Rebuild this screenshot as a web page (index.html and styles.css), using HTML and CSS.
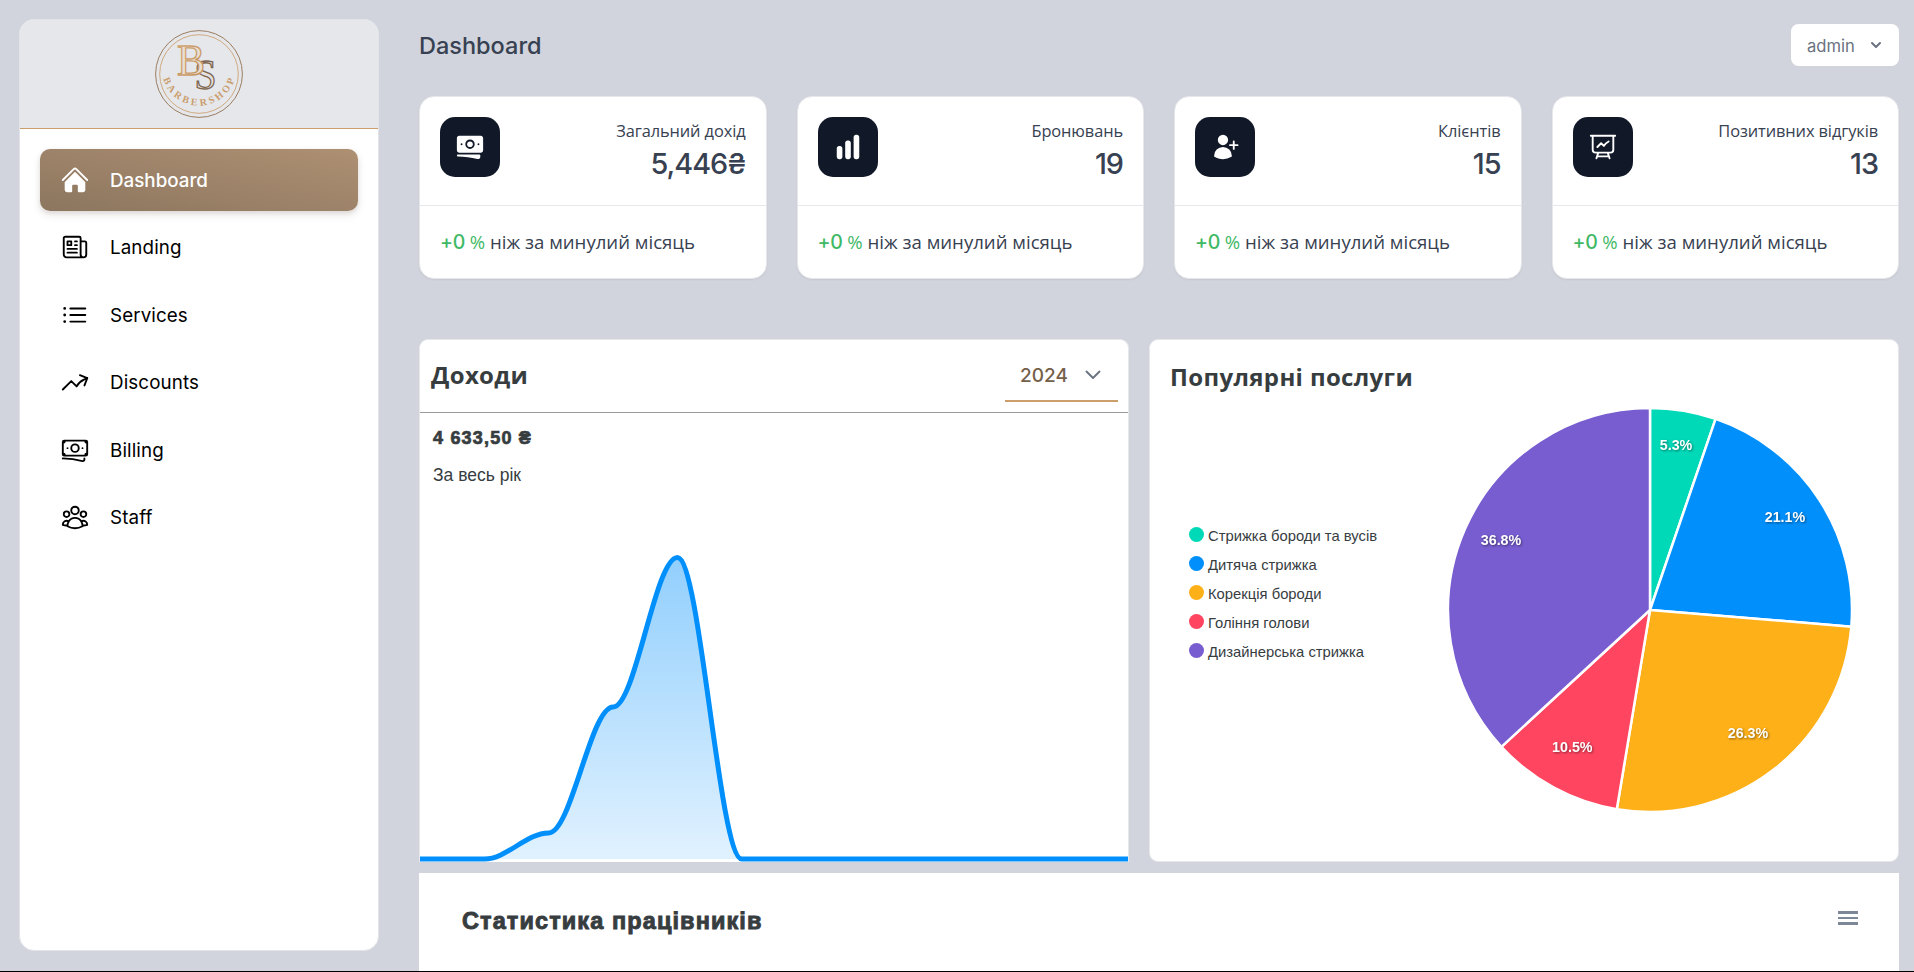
FILE: index.html
```html
<!DOCTYPE html>
<html lang="uk">
<head>
<meta charset="utf-8">
<title>Dashboard</title>
<link rel="stylesheet" href="styles.css">
</head>
<body>
<div class="app">
  <aside class="sidebar">
    <div class="brand">
      <svg class="logo" viewBox="0 0 90 90" width="90" height="90">
        <defs>
          <linearGradient id="gold" x1="0" y1="0" x2="1" y2="1"><stop offset="0" stop-color="#d3a675"/><stop offset="1" stop-color="#c18f58"/></linearGradient>
          <path id="arc" d="M7.8 42 A37.3 37.3 0 0 0 82.2 42"/>
        </defs>
        <circle cx="45" cy="45" r="43.4" fill="none" stroke="#9a7d60" stroke-width="1"/>
        <circle cx="45" cy="45" r="39.3" fill="none" stroke="#d0aa80" stroke-width="1"/>
        <text class="logo-s" x="40.5" y="60" textLength="22" lengthAdjust="spacingAndGlyphs">S</text>
        <text class="logo-b" x="23" y="46" textLength="28" lengthAdjust="spacingAndGlyphs">B</text>
        <text class="logo-name"><textPath href="#arc" startOffset="51%" text-anchor="middle">BARBERSHOP</textPath></text>
      </svg>
    </div>
    <nav class="nav">
      <a class="nav-item active"><svg class="icon solid" viewBox="0 0 24 24"><path d="M11.47 3.84a.75.75 0 011.06 0l8.69 8.69a.75.75 0 101.06-1.06l-8.689-8.69a2.25 2.25 0 00-3.182 0l-8.69 8.69a.75.75 0 001.061 1.06l8.69-8.69z"/><path d="M12 5.432l8.159 8.159c.03.03.06.058.091.086v6.198c0 1.035-.84 1.875-1.875 1.875H15a.75.75 0 01-.75-.75v-4.5a.75.75 0 00-.75-.75h-3a.75.75 0 00-.75.75V21a.75.75 0 01-.75.75H5.625a1.875 1.875 0 01-1.875-1.875v-6.198a2.29 2.29 0 00.091-.086L12 5.43z"/></svg><span>Dashboard</span></a>
      <a class="nav-item"><svg class="icon" viewBox="0 0 24 24"><path d="M12 7.5h1.5m-1.5 3h1.5m-7.5 3h7.5m-7.5 3h7.5m3-9h3.375c.621 0 1.125.504 1.125 1.125V18a2.25 2.25 0 01-2.25 2.25M16.5 7.5V18a2.25 2.25 0 002.25 2.25M16.5 7.5V4.875c0-.621-.504-1.125-1.125-1.125H4.125C3.504 3.75 3 4.254 3 4.875V18a2.25 2.25 0 002.25 2.25h13.5M6 7.5h3v3H6v-3z"/></svg><span>Landing</span></a>
      <a class="nav-item"><svg class="icon" viewBox="0 0 24 24"><path d="M8.25 6.75h12M8.25 12h12m-12 5.25h12M3.75 6.75h.007v.008H3.75V6.75zm.375 0a.375.375 0 11-.75 0 .375.375 0 01.75 0zM3.75 12h.007v.008H3.75V12zm.375 0a.375.375 0 11-.75 0 .375.375 0 01.75 0zm-.375 5.25h.007v.008H3.75v-.008zm.375 0a.375.375 0 11-.75 0 .375.375 0 01.75 0z"/></svg><span>Services</span></a>
      <a class="nav-item"><svg class="icon" viewBox="0 0 24 24"><path d="M2.25 18L9 11.25l4.306 4.307a11.95 11.95 0 015.814-5.519l2.74-1.22m0 0l-5.94-2.28m5.94 2.28l-2.28 5.941"/></svg><span>Discounts</span></a>
      <a class="nav-item"><svg class="icon" viewBox="0 0 24 24"><path d="M2.25 18.75a60.07 60.07 0 0115.797 2.101c.727.198 1.453-.342 1.453-1.096V18.75M3.75 4.5v.75A.75.75 0 013 6h-.75m0 0v-.375c0-.621.504-1.125 1.125-1.125H20.25M2.25 6v9m18-10.5v.75c0 .414.336.75.75.75h.75m-1.5-1.5h.375c.621 0 1.125.504 1.125 1.125v9.75c0 .621-.504 1.125-1.125 1.125h-.375m1.5-1.5H21a.75.75 0 00-.75.75v.75m0 0H3.75m0 0h-.375a1.125 1.125 0 01-1.125-1.125V15m1.5 1.5v-.75A.75.75 0 003 15h-.75M15 10.5a3 3 0 11-6 0 3 3 0 016 0zm3 0h.008v.008H18V10.5zm-12 0h.008v.008H6V10.5z"/></svg><span>Billing</span></a>
      <a class="nav-item"><svg class="icon" viewBox="0 0 24 24"><path d="M18 18.72a9.094 9.094 0 003.741-.479 3 3 0 00-4.682-2.72m.94 3.198l.001.031c0 .225-.012.447-.037.666A11.944 11.944 0 0112 21c-2.17 0-4.207-.576-5.963-1.584A6.062 6.062 0 016 18.719m12 0a5.971 5.971 0 00-.941-3.197m0 0A5.995 5.995 0 0012 12.75a5.995 5.995 0 00-5.058 2.772m0 0a3 3 0 00-4.681 2.72 8.986 8.986 0 003.74.477m.94-3.197a5.971 5.971 0 00-.94 3.197M15 6.75a3 3 0 11-6 0 3 3 0 016 0zm6 3a2.25 2.25 0 11-4.5 0 2.25 2.25 0 014.5 0zm-13.5 0a2.25 2.25 0 11-4.5 0 2.25 2.25 0 014.5 0z"/></svg><span>Staff</span></a>
    </nav>
  </aside>

  <main class="main">
    <header class="topbar">
      <h1 class="page-title">Dashboard</h1>
      <button class="user-btn"><span>admin</span><svg viewBox="0 0 20 20" width="20" height="20"><path fill="currentColor" d="M5.293 7.293a1 1 0 011.414 0L10 10.586l3.293-3.293a1 1 0 111.414 1.414l-4 4a1 1 0 01-1.414 0l-4-4a1 1 0 010-1.414z"/></svg></button>
    </header>

    <section class="stats">
      <article class="stat">
        <div class="stat-top">
          <div class="tile"><svg class="icon solid" viewBox="0 0 24 24"><path d="M12 7.5a2.25 2.25 0 100 4.5 2.25 2.25 0 000-4.5z"/><path fill-rule="evenodd" d="M1.5 4.875C1.5 3.839 2.34 3 3.375 3h17.25c1.035 0 1.875.84 1.875 1.875v9.75c0 1.036-.84 1.875-1.875 1.875H3.375A1.875 1.875 0 011.5 14.625v-9.75zM8.25 9.75a3.75 3.75 0 117.5 0 3.75 3.75 0 01-7.5 0zM18.75 9a.75.75 0 00-.75.75v.008c0 .414.336.75.75.75h.008a.75.75 0 00.75-.75V9.75a.75.75 0 00-.75-.75h-.008zM4.5 9.75A.75.75 0 015.25 9h.008a.75.75 0 01.75.75v.008a.75.75 0 01-.75.75H5.25a.75.75 0 01-.75-.75V9.75z"/><path d="M2.25 18a.75.75 0 000 1.5c5.4 0 10.63.722 15.6 2.075 1.19.324 2.4-.558 2.4-1.82V18.75a.75.75 0 00-.75-.75H2.25z"/></svg></div>
          <div class="stat-info"><p class="stat-label">Загальний дохід</p><p class="stat-value">5,446₴</p></div>
        </div>
        <p class="stat-foot"><b class="pct"><span class="num">+0</span> %</b> ніж за минулий місяць</p>
      </article>
      <article class="stat">
        <div class="stat-top">
          <div class="tile"><svg class="icon solid" viewBox="0 0 24 24"><path d="M18.375 2.25c-1.035 0-1.875.84-1.875 1.875v15.75c0 1.035.84 1.875 1.875 1.875h.75c1.035 0 1.875-.84 1.875-1.875V4.125c0-1.036-.84-1.875-1.875-1.875h-.75zM9.75 8.625c0-1.036.84-1.875 1.875-1.875h.75c1.036 0 1.875.84 1.875 1.875v11.25c0 1.035-.84 1.875-1.875 1.875h-.75a1.875 1.875 0 01-1.875-1.875V8.625zM3 13.125c0-1.036.84-1.875 1.875-1.875h.75c1.036 0 1.875.84 1.875 1.875v6.75c0 1.035-.84 1.875-1.875 1.875h-.75A1.875 1.875 0 013 19.875v-6.75z"/></svg></div>
          <div class="stat-info"><p class="stat-label">Бронювань</p><p class="stat-value">19</p></div>
        </div>
        <p class="stat-foot"><b class="pct"><span class="num">+0</span> %</b> ніж за минулий місяць</p>
      </article>
      <article class="stat">
        <div class="stat-top">
          <div class="tile"><svg class="icon solid" viewBox="0 0 24 24"><path d="M6.25 6.375a4.125 4.125 0 118.25 0 4.125 4.125 0 01-8.25 0zM3.25 19.125a7.125 7.125 0 0114.25 0v.003l-.001.119a.75.75 0 01-.363.63 13.067 13.067 0 01-6.761 1.873c-2.472 0-4.786-.684-6.76-1.873a.75.75 0 01-.364-.63l-.001-.122zM19.75 7.5a.75.75 0 00-1.5 0v2.25H16a.75.75 0 000 1.5h2.25v2.25a.75.75 0 001.5 0v-2.25H22a.75.75 0 000-1.5h-2.25V7.5z"/></svg></div>
          <div class="stat-info"><p class="stat-label">Клієнтів</p><p class="stat-value">15</p></div>
        </div>
        <p class="stat-foot"><b class="pct"><span class="num">+0</span> %</b> ніж за минулий місяць</p>
      </article>
      <article class="stat">
        <div class="stat-top">
          <div class="tile"><svg class="icon" viewBox="0 0 24 24"><path d="M3.75 3v11.25A2.25 2.25 0 006 16.5h2.25M3.75 3h-1.5m1.5 0h16.5m0 0h1.5m-1.5 0v11.25A2.25 2.25 0 0118 16.5h-2.25m-7.5 0h7.5m-7.5 0l-1 3m8.5-3l1 3m0 0l.5 1.5m-.5-1.5h-9.5m0 0l-.5 1.5m.75-9l3-3 2.148 2.148A12.061 12.061 0 0116.5 7.605"/></svg></div>
          <div class="stat-info"><p class="stat-label">Позитивних відгуків</p><p class="stat-value">13</p></div>
        </div>
        <p class="stat-foot"><b class="pct"><span class="num">+0</span> %</b> ніж за минулий місяць</p>
      </article>
    </section>

    <section class="charts">
      <article class="panel income">
        <div class="income-head">
          <h2 class="panel-title">Доходи</h2>
          <div class="year"><span>2024</span><svg viewBox="0 0 16 10" width="16" height="10"><path d="M1.5 1.5 8 8l6.5-6.5" fill="none" stroke="#6b7280" stroke-width="1.9" stroke-linecap="round" stroke-linejoin="round"/></svg></div>
        </div>
        <p class="income-sum">4 633,50 ₴</p>
        <p class="income-note">За весь рік</p>
        <svg class="area" viewBox="0 0 708 314" width="708" height="314">
          <defs><linearGradient id="fill" x1="0" y1="0" x2="0" y2="1"><stop offset="0" stop-color="#008ffb" stop-opacity=".43"/><stop offset="1" stop-color="#008ffb" stop-opacity=".12"/></linearGradient></defs>
          <path fill="url(#fill)" d="M0 311H64.4C86.9 311 106.2 285 128.7 285C151.3 285 170.6 159 193.1 159C215.6 159 235 9.5 257.5 9.5C280 9.5 299.3 311 321.8 311Z"/>
          <path fill="none" stroke="#008ffb" stroke-width="5" d="M0 311H64.4C86.9 311 106.2 285 128.7 285C151.3 285 170.6 159 193.1 159C215.6 159 235 9.5 257.5 9.5C280 9.5 299.3 311 321.8 311H708"/>
        </svg>
      </article>
      <article class="panel services">
        <h2 class="panel-title">Популярні послуги</h2>
        <div class="pie-row">
          <ul class="legend">
            <li><i class="dot teal"></i>Стрижка бороди та вусів</li>
            <li><i class="dot blue"></i>Дитяча стрижка</li>
            <li><i class="dot amber"></i>Корекція бороди</li>
            <li><i class="dot red"></i>Гоління голови</li>
            <li><i class="dot violet"></i>Дизайнерська стрижка</li>
          </ul>
          <svg class="pie" viewBox="-205 -205 410 410" width="410" height="410">
            <g stroke="#fff" stroke-width="2.5" stroke-linejoin="round">
              <path fill="#00d9b8" d="M0 0V-202A202 202 0 0 1 65.6 -191.1Z"/>
              <path fill="#008ffb" d="M0 0L65.6 -191.1A202 202 0 0 1 201.3 16.7Z"/>
              <path fill="#feb019" d="M0 0L201.3 16.7A202 202 0 0 1 -33.2 199.2Z"/>
              <path fill="#ff4560" d="M0 0L-33.2 199.2A202 202 0 0 1 -148.6 136.8Z"/>
              <path fill="#775dd0" d="M0 0L-148.6 136.8A202 202 0 0 1 0 -202Z"/>
            </g>
            <g class="pie-labels">
              <text x="26" y="-159.7">5.3%</text>
              <text x="135" y="-87.7">21.1%</text>
              <text x="98" y="128.3">26.3%</text>
              <text x="-77.7" y="142">10.5%</text>
              <text x="-149" y="-64.7">36.8%</text>
            </g>
          </svg>
        </div>
      </article>
    </section>

    <section class="staff">
      <h2 class="staff-title">Статистика працівників</h2>
      <div class="menu"><i></i><i></i><i></i></div>
    </section>
  </main>
</div>
</body>
</html>
```
FILE: styles.css
```css
* { box-sizing: border-box; margin: 0; padding: 0; }
body {
  height: 972px;
  overflow: hidden;
  background: #d1d4dc;
  border-bottom: 1px solid #000;
  font-family: Inter, "Open Sans", sans-serif;
  color: #374151;
}
.app { display: flex; height: 971px; overflow: hidden; padding: 19px 15px 0 19px; }

.sidebar {
  width: 360px;
  height: 932px;
  flex: none;
  background: #fff;
  border: 1px solid #e2e4e9;
  border-radius: 15px;
  overflow: hidden;
}
.brand {
  height: 109px;
  display: flex;
  justify-content: center;
  padding-top: 9px;
  background: #e5e7eb;
  border-bottom: 1px solid #cc9e6c;
}
.logo-b, .logo-s { font-family: "Liberation Serif", serif; font-size: 44px; }
.logo-b { fill: #eadfd4; stroke: url(#gold); stroke-width: 1.3; }
.logo-s { font-size: 42px; fill: #e5e2df; stroke: #7d654f; stroke-width: 1.3; }
.logo-name { font-family: "Liberation Serif", serif; font-size: 10px; font-weight: 700; fill: #cb9e6e; letter-spacing: 2.9px; }

.nav { display: flex; flex-direction: column; gap: 6px; padding: 20px; }
.nav-item {
  height: 61.5px;
  display: flex;
  align-items: center;
  gap: 20px;
  padding: 0 20px;
  border-radius: 10px;
  color: #000;
  font-size: 18.8px;
}
.nav-item span { padding-top: 1px; letter-spacing: .1px; }
.nav-item.active span { font-weight: 450; letter-spacing: 0; }
.nav-item.active {
  color: #fff;
  background: linear-gradient(to top right, #8c765f, #ae9073);
  box-shadow: 0 4px 8px rgba(60, 40, 20, .1), 0 2px 4px rgba(60, 40, 20, .1);
}
.icon { width: 30px; height: 30px; flex: none; fill: none; stroke: currentColor; stroke-width: 1.5; stroke-linecap: round; stroke-linejoin: round; }
.icon.solid { fill: currentColor; stroke: none; }

.main { flex: 1; margin-left: 40px; display: flex; flex-direction: column; }
.topbar { display: flex; justify-content: space-between; align-items: center; height: 42px; margin-top: 5px; }
.page-title { font-size: 23.5px; font-weight: 500; line-height: 42px; padding-top: 2px; }
.user-btn {
  width: 108px;
  height: 42px;
  display: flex;
  align-items: center;
  justify-content: space-between;
  padding: 0 13px 0 16px;
  background: #fff;
  border: 0;
  border-radius: 7.5px;
  color: #6b7280;
  font: 400 16.6px Inter, sans-serif;
}
.user-btn span { padding-top: 2px; }

.stats { display: grid; grid-template-columns: repeat(4, 1fr); gap: 30px; margin-top: 30px; }
.stat {
  height: 183px;
  background: #fff;
  border: 1px solid #e5e7eb;
  border-radius: 15px;
  box-shadow: 0 1px 2px rgba(0, 0, 0, .06);
}
.stat-top { height: 109px; display: flex; justify-content: space-between; padding: 20px; border-bottom: 1px solid #e5e7eb; }
.tile { width: 60px; height: 60px; display: flex; align-items: center; justify-content: center; background: #111827; border-radius: 15px; color: #fff; }
.stat-info { text-align: right; padding-top: 1px; }
.stat-label { font-family: "Open Sans", sans-serif; font-size: 16.4px; line-height: 26px; font-weight: 400; letter-spacing: -.1px; white-space: nowrap; }
.stat-value { font-size: 28.8px; line-height: 40px; font-weight: 550; letter-spacing: -1px; }
.stat-foot { padding: 20.5px 20px 0; font-family: "Open Sans", sans-serif; font-size: 18.6px; line-height: 30px; white-space: nowrap; }
.pct { font-weight: 500; color: #3fb965; }
.num { font-family: Inter, sans-serif; font-weight: 550; font-size: 19.5px; letter-spacing: -.3px; }

.charts { display: grid; grid-template-columns: 710px 1fr; gap: 20px; margin-top: 60px; }
.panel { height: 523px; background: #fff; border: 1px solid #e5e7eb; border-radius: 9px; overflow: hidden; }
.panel-title { font-family: "Open Sans", sans-serif; font-size: 24px; line-height: 34px; font-weight: 700; color: #373d3f; letter-spacing: .35px; white-space: nowrap; }
.income { display: flex; flex-direction: column; border-bottom: 0; border-radius: 9px 9px 0 0; }
.income-head { height: 73px; display: flex; justify-content: space-between; padding: 18px 10px 0 11px; border-bottom: 1px solid #9a9a9a; }
.year {
  width: 113px;
  height: 44px;
  display: flex;
  align-items: center;
  justify-content: space-between;
  padding: 0 17px 8px 15px;
  border-bottom: 2px solid #cc9e6c;
  color: #75604a;
  font-size: 19px;
  font-weight: 500;
}
.income-sum { margin: 13px 0 0 13px; font: 700 18px/24px "Liberation Sans", sans-serif; color: #373d3f; -webkit-text-stroke: .7px #373d3f; letter-spacing: 1.2px; }
.income-note { margin: 13px 0 0 13px; font: 400 17.5px/24px "Liberation Sans", sans-serif; color: #373d3f; }
.area { margin-top: auto; flex: none; display: block; }
.services { padding: 20px 20px 0; }
.pie-row { display: flex; align-items: center; justify-content: space-between; height: 410px; margin-top: 11px; padding: 0 23px 0 19px; }
.legend { list-style: none; margin-top: -32px; }
.legend li { display: flex; align-items: center; gap: 4px; height: 29px; font: 14.8px/29px "Liberation Sans", sans-serif; color: #373d3f; white-space: nowrap; }
.dot { width: 15px; height: 15px; margin-bottom: 4px; border-radius: 50%; }
.teal { background: #00d9b8; }
.blue { background: #008ffb; }
.amber { background: #feb019; }
.red { background: #ff4560; }
.violet { background: #775dd0; }
.pie { flex: none; }
.pie-labels { font: 700 14.3px "Liberation Sans", sans-serif; fill: #fff; text-anchor: middle; filter: drop-shadow(1px 1px 1px rgba(0, 0, 0, .45)); }

.staff { display: flex; justify-content: space-between; height: 110px; margin-top: 11px; padding: 32px 41px 0 43px; background: #fff; flex: none; }
.staff-title { font: 700 23.5px/32px "Liberation Sans", sans-serif; color: #373d3f; -webkit-text-stroke: .9px #373d3f; letter-spacing: 1.1px; white-space: nowrap; }
.menu { width: 20px; display: flex; flex-direction: column; gap: 3px; padding-top: 6px; }
.menu i { height: 2.5px; background: #7c8898; }
```
